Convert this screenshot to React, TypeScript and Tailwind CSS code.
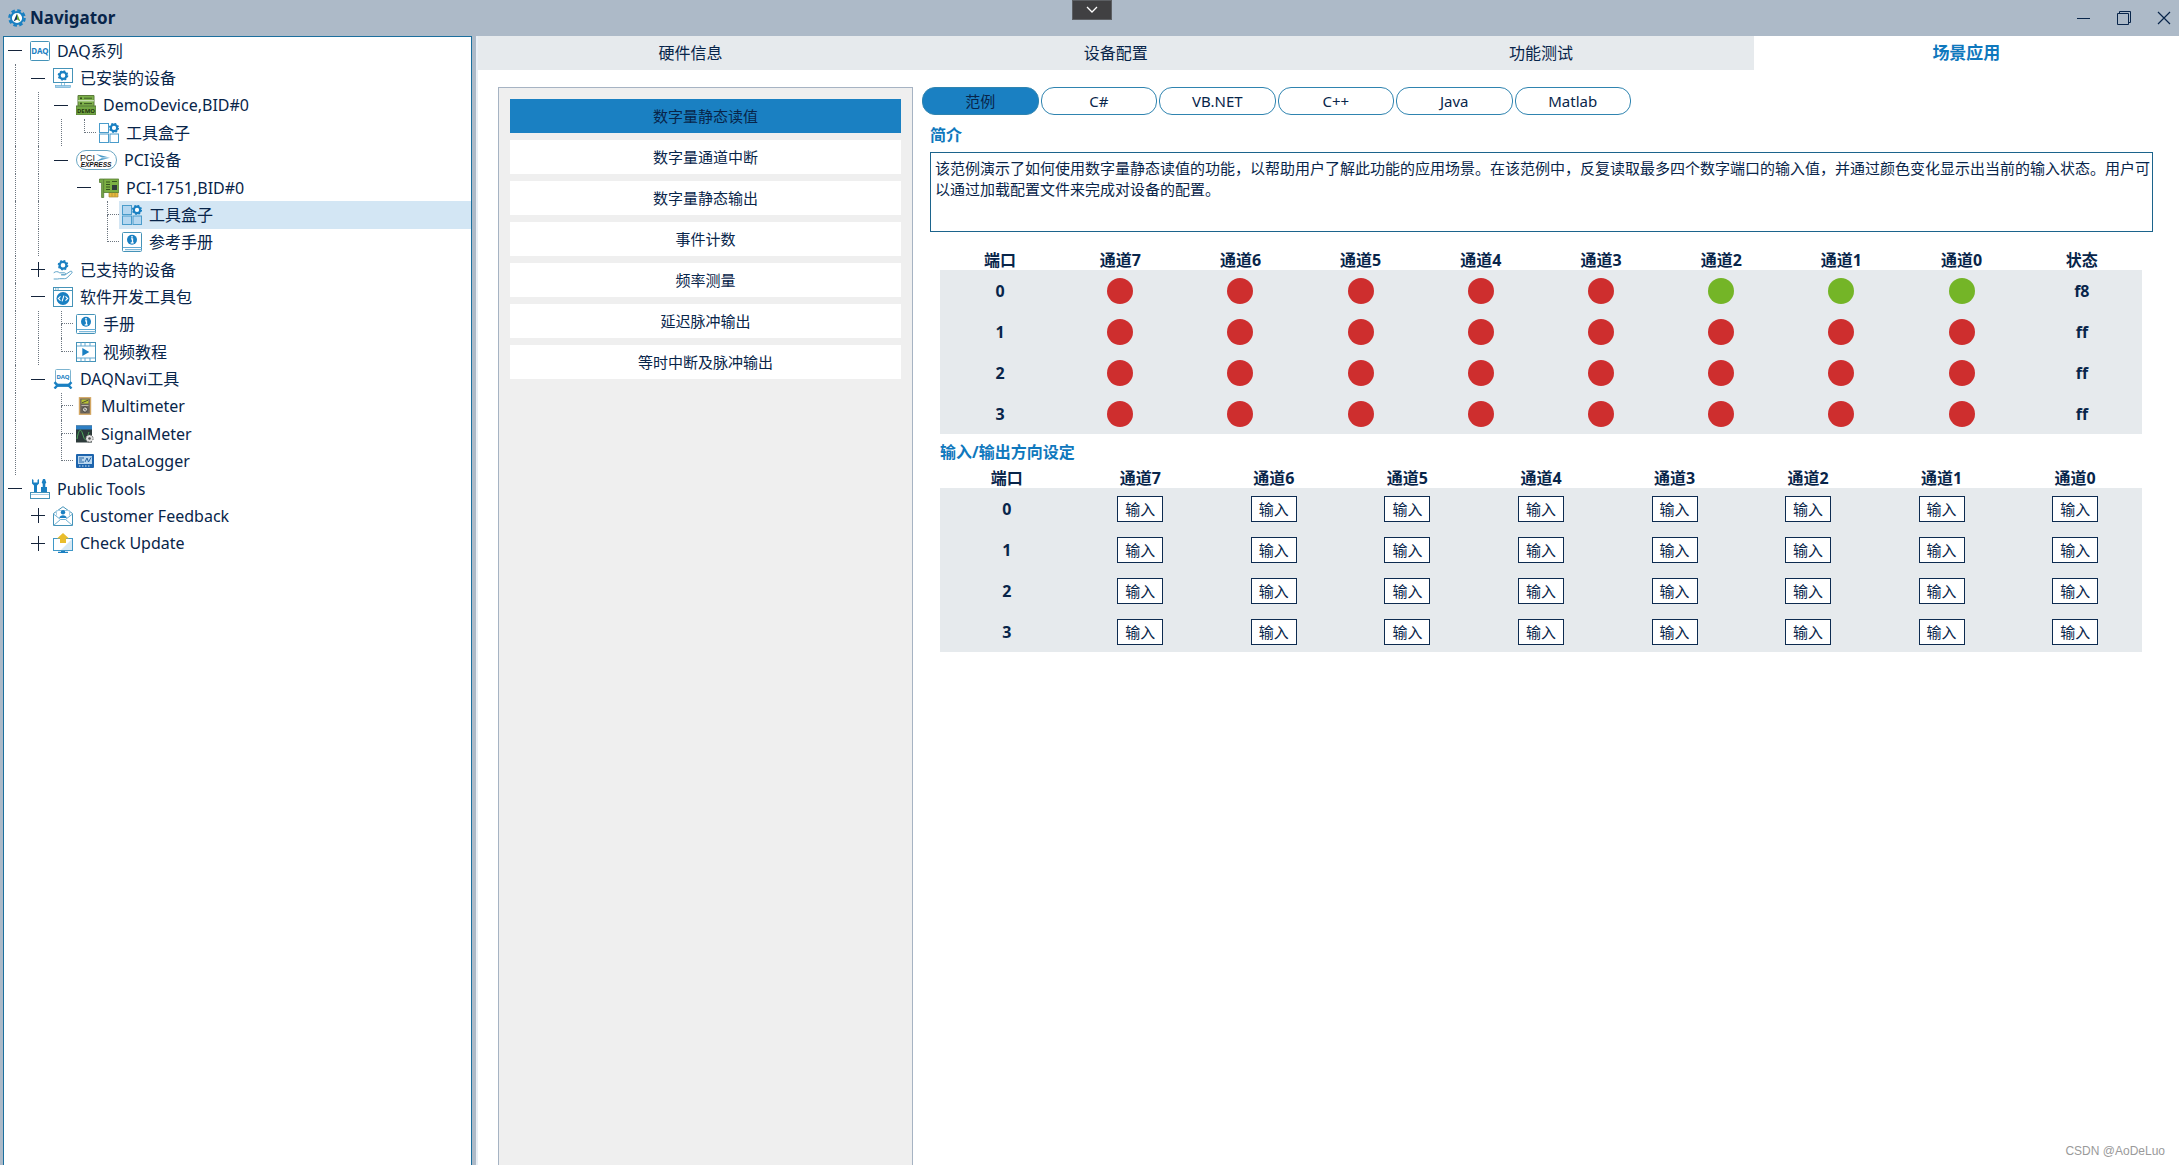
import { useState, type ReactNode } from 'react';
import clsx from 'clsx';

const BLUE = '#1a80c2';
const EDGE = '#4593b8';

/* ---------- icons ---------- */

function Gear({ cx, cy, r, fill = '#fff' }: { cx: number; cy: number; r: number; fill?: string }) {
  const step = (2 * Math.PI * (r + 1.2)) / 16;
  return (
    <g stroke={BLUE}>
      <circle cx={cx} cy={cy} r={r + 1.2} fill="none" strokeWidth="1.4" strokeDasharray={`${step} ${step}`} />
      <circle cx={cx} cy={cy} r={r} fill={fill} strokeWidth="2.2" />
    </g>
  );
}

function Svg({ w = 20, h = 20, children }: { w?: number; h?: number; children: ReactNode }) {
  return (
    <svg width={w} height={h} viewBox={`0 0 ${w} ${h}`} fill="none" className="shrink-0" aria-hidden="true">
      {children}
    </svg>
  );
}

function LogoIcon() {
  return (
    <Svg w={18} h={18}>
      <circle cx="9" cy="9" r="7.6" stroke={BLUE} strokeWidth="2.4" strokeDasharray="3.6 2.37" />
      <circle cx="9" cy="9" r="6" fill="#fff" stroke={BLUE} strokeWidth="1.8" />
      <path d="M9 4.5 5.6 12.6 9 10.6Z" fill="#12355f" />
      <path d="M9 4.5 12.4 12.6 9 10.6Z" fill="#6aa83a" />
    </Svg>
  );
}

function DaqIcon() {
  return (
    <Svg>
      <rect x="0.5" y="0.5" width="19" height="19" rx="1" fill="#fff" stroke={EDGE} />
      <text x="10" y="13" textAnchor="middle" fontSize="8" fontWeight="700" fontFamily="Noto Sans" fill={BLUE}>
        DAQ
      </text>
    </Svg>
  );
}

function MonitorIcon() {
  return (
    <Svg>
      <rect x="0.5" y="0.5" width="19" height="14" fill="#fff" stroke={EDGE} />
      <Gear cx={10} cy={7.5} r={3.4} />
      <path d="M8.5 15v3M11.5 15v3" stroke="#8fc3e0" />
      <rect x="2.5" y="17.5" width="15" height="2" fill="#a9d2ea" stroke="#5aa6d0" strokeWidth="0.6" />
    </Svg>
  );
}

function DemoIcon() {
  return (
    <Svg>
      <path d="M2 .5h16v11H2z" fill="#7db04a" stroke="#5c7c3c" />
      <path d="M0 11h20v9H0z" fill="#74a844" stroke="#56793a" />
      <path d="M2 5.8h16" stroke="#e6f2da" />
      <path d="M8 3.2h8M8 8.6h8" stroke="#3c5a25" />
      <circle cx="5" cy="3.2" r="1" fill="#2c4419" />
      <circle cx="5" cy="8.6" r="1" fill="#2c4419" />
      <text x="10" y="18" textAnchor="middle" fontSize="6" fontWeight="700" fontFamily="Noto Sans" fill="#24380f">
        DEMO
      </text>
    </Svg>
  );
}

function ToolboxIcon({ fill = '#fff' }: { fill?: string }) {
  return (
    <Svg>
      <g fill={fill} stroke="#4a9ccb">
        <rect x="0.5" y="0.5" width="9" height="9" />
        <rect x="0.5" y="11" width="9" height="8.5" />
        <rect x="11" y="11" width="8.5" height="8.5" />
      </g>
      <Gear cx={15} cy={4.9} r={3.2} />
    </Svg>
  );
}

function PciIcon() {
  return (
    <Svg w={41}>
      <rect x="0.5" y="0.5" width="40" height="19" rx="9.5" fill="#fff" stroke="#6ba7c4" />
      <text x="4" y="10.5" fontSize="9" fontFamily="Liberation Sans" fill="#222">
        PCI
      </text>
      <path d="M20 4 34 7.8 20 11.6l6-3.8z" fill="#4b9bc8" />
      <path d="M21 7.8h13" stroke="#fff" strokeWidth="0.7" />
      <text x="20" y="16.8" textAnchor="middle" fontSize="6.5" fontWeight="700" fontStyle="italic" fontFamily="Liberation Sans" fill="#111">
        EXPRESS
      </text>
    </Svg>
  );
}

function CardIcon() {
  return (
    <Svg>
      <path d="M10 14h9v5h-9z" fill="#e6b93c" stroke="#a98a3a" strokeWidth="0.7" />
      <path d="M.5 1h4.2v18.5H2.6V4.5H.5z" fill="#77a848" stroke="#557c34" strokeWidth="0.8" />
      <path d="M4.7 1h15v13.5h-15z" fill="#7cb043" stroke="#557c34" strokeWidth="0.8" />
      <path d="M7 4h4M7 6.5h4M7 9h4M7 11.5h4M13 3.5h5" stroke="#36551f" />
      <rect x="13" y="7" width="5" height="5" fill="#2f3c3a" />
      <path d="M13 14.5v4M16 14.5v4" stroke="#a98a3a" strokeWidth="0.7" />
    </Svg>
  );
}

function BookIcon() {
  return (
    <Svg>
      <rect x="0.5" y="0.5" width="19" height="19" rx="1" fill="#fff" stroke={EDGE} />
      <path d="M1 15.5h19M3 17.7h17" stroke="#62a9d2" />
      <circle cx="10" cy="7.7" r="5" fill={BLUE} />
      <path d="M9 6.8h1.5v3.8M8.7 10.8h3" stroke="#fff" strokeWidth="1.3" />
      <circle cx="10" cy="4.8" r="0.9" fill="#fff" />
    </Svg>
  );
}

function SupportIcon() {
  return (
    <Svg>
      <Gear cx={10} cy={5.2} r={3.4} />
      <path
        d="M.7 12.8c2-1.6 4-1.5 6 0h4.8c1.4 0 1.4 2 0 2H8.2h4l5-3.4c1.4-.7 2.6.5 1.6 1.7l-4.7 4.6c-.8.8-1.6 1-2.7 1H6.5L4.4 19 .7 19"
        fill="#fff"
        stroke="#5ea3c8"
      />
    </Svg>
  );
}

function SdkIcon() {
  return (
    <Svg>
      <rect x="0.5" y="0.5" width="19" height="19" fill="#fff" stroke={EDGE} />
      <path d="M1 3.5h18" stroke={EDGE} />
      <path d="M2 2h4" stroke={EDGE} strokeDasharray="1 .6" />
      <circle cx="10" cy="11.5" r="6.5" fill={BLUE} />
      <path d="M7.5 9.3 5.3 11.5l2.2 2.2M12.5 9.3l2.2 2.2-2.2 2.2M10.9 8.7l-1.8 5.6" stroke="#fff" strokeWidth="1.1" />
    </Svg>
  );
}

function VideoIcon() {
  return (
    <Svg>
      <rect x="0.5" y="0.5" width="19" height="19" fill="#fff" stroke={EDGE} />
      <path d="M1 4h18M1 16h18" stroke="#62a9d2" />
      <path d="M5 .5V4M9 .5V4M14 .5V4M5 16v3.5M9 16v3.5M14 16v3.5" stroke="#62a9d2" />
      <path d="M6.3 6v8l7-4z" fill={BLUE} />
    </Svg>
  );
}

function DaqToolsIcon() {
  return (
    <Svg>
      <path d="M2.5 14V1.5q0-1 1-1h13q1 0 1 1V14" fill="#fff" stroke="#7db4d0" />
      <text x="10" y="9.5" textAnchor="middle" fontSize="6" fontWeight="700" fontFamily="Noto Sans" fill={BLUE}>
        DAQ
      </text>
      <path d="M4 16.3h12" stroke={BLUE} strokeWidth="3.2" />
      <path d="M1.5 13.2l3 3.1-3 3.2M18.5 13.2l-3 3.1 3 3.2" stroke={BLUE} strokeWidth="2.4" />
    </Svg>
  );
}

function MultimeterIcon() {
  return (
    <Svg w={18} h={18}>
      <rect x="3.5" y="0.8" width="11" height="16.4" fill="#6b655c" stroke="#d3a763" strokeWidth="1.4" />
      <rect x="5.5" y="2.5" width="7" height="4" fill="#b8c432" />
      <path d="M6 5.8 12 3.2" stroke="#333" strokeWidth="0.8" />
      <path d="M5.5 8.5h7" stroke="#bdb7aa" />
      <circle cx="9" cy="12.5" r="2.6" fill="#cfccc4" stroke="#3a3732" strokeWidth="0.8" />
      <path d="M8 11.5l2 2" stroke="#333" />
    </Svg>
  );
}

function SignalIcon() {
  return (
    <Svg w={18} h={18}>
      <rect width="16" height="17" y="0.5" fill="#2c3a3a" />
      <rect width="16" height="4" y="0.5" fill="#2e7fc4" />
      <path d="M1 14C3 3 5 3 7 10s3 6 6-3" stroke="#4fa85c" />
      <circle cx="13.5" cy="13.5" r="2.6" fill="#e3e3e3" stroke="#e3e3e3" strokeWidth="2" />
      <circle cx="13.5" cy="13.5" r="3.6" stroke="#666" strokeDasharray="1.6 1.2" />
      <circle cx="13.5" cy="13.5" r="1.3" fill="#555" />
    </Svg>
  );
}

function LoggerIcon() {
  return (
    <Svg w={18} h={14}>
      <rect width="18" height="14" rx="1" fill="#1d64ad" />
      <rect x="2" y="2" width="14" height="8" fill="#b9d6ee" />
      <path d="M3 4h5M3 6h3M3 8h5M9 8l2-4 1.5 4L15 3.5" stroke="#2363a3" />
      <path d="M3 12h12" stroke="#d3e5f5" strokeDasharray="1.5 1.5" />
    </Svg>
  );
}

function PublicToolsIcon() {
  return (
    <Svg>
      <path d="M2 0v4.5l2 2V13h3V6.5l2-2V0L7.5 1v2.5h-4V1z" fill={BLUE} />
      <path d="M13 0h2l1.3 3.8-1 1V8H17v5h-6V8h1.7V4.8l-1-1z" fill={BLUE} />
      <rect x="0.5" y="13.5" width="19" height="6" fill="#fff" stroke={EDGE} />
      <path d="M1 15.5h18" stroke="#a8d0e6" />
    </Svg>
  );
}

function FeedbackIcon() {
  return (
    <Svg>
      <path d="M.5 7.5 10 .7l9.5 6.8v12H.5z" fill="#fff" stroke={EDGE} />
      <path d="M3.5 9.5V4.5h13v5" stroke="#a8d0e6" />
      <path d="M.5 8l7 5.5h5l7-5.5M.5 19.5l7-6M19.5 19.5l-7-6" stroke="#6fb0d3" />
      <circle cx="10" cy="6.3" r="2.2" fill={BLUE} />
      <path d="M6.3 12c.5-3.6 6.9-3.6 7.4 0z" fill={BLUE} />
    </Svg>
  );
}

function UpdateIcon() {
  return (
    <Svg>
      <rect x="0.5" y="5.5" width="19" height="12" fill="#fff" stroke="#3f98c8" />
      <path d="M19 6v11H8z" fill="#d6e8f4" />
      <path d="M10 0l6 5.5h-3V10H7V5.5H4z" fill="#e9bd2c" />
      <path d="M8 18h4v1.2H8zM5 18.8h10V20H5z" fill={BLUE} />
    </Svg>
  );
}

/* ---------- device tree ---------- */

interface TreeItem {
  label: string;
  icon: ReactNode;
  // one mark per column: '|' line, '.' blank, 'T' tee, 'L' corner, '-' open, '+' closed
  marks: string;
  selected?: boolean;
}

const TREE: TreeItem[] = [
  { label: 'DAQ系列', icon: <DaqIcon />, marks: '-' },
  { label: '已安装的设备', icon: <MonitorIcon />, marks: '|-' },
  { label: 'DemoDevice,BID#0', icon: <DemoIcon />, marks: '||-' },
  { label: '工具盒子', icon: <ToolboxIcon />, marks: '|||L' },
  { label: 'PCI设备', icon: <PciIcon />, marks: '||-' },
  { label: 'PCI-1751,BID#0', icon: <CardIcon />, marks: '||.-' },
  { label: '工具盒子', icon: <ToolboxIcon fill="#b5d7f0" />, marks: '||..T', selected: true },
  { label: '参考手册', icon: <BookIcon />, marks: '||..L' },
  { label: '已支持的设备', icon: <SupportIcon />, marks: '|+' },
  { label: '软件开发工具包', icon: <SdkIcon />, marks: '|-' },
  { label: '手册', icon: <BookIcon />, marks: '||T' },
  { label: '视频教程', icon: <VideoIcon />, marks: '||L' },
  { label: 'DAQNavi工具', icon: <DaqToolsIcon />, marks: '|-' },
  { label: 'Multimeter', icon: <MultimeterIcon />, marks: '|.T' },
  { label: 'SignalMeter', icon: <SignalIcon />, marks: '|.T' },
  { label: 'DataLogger', icon: <LoggerIcon />, marks: '|.L' },
  { label: 'Public Tools', icon: <PublicToolsIcon />, marks: '-' },
  { label: 'Customer Feedback', icon: <FeedbackIcon />, marks: '.+' },
  { label: 'Check Update', icon: <UpdateIcon />, marks: '.+' },
];

function Mark({ mark }: { mark: string }) {
  if (mark === '-' || mark === '+') {
    return (
      <button aria-label={mark === '-' ? 'Collapse' : 'Expand'} className="flex w-[23px] shrink-0 items-center justify-center">
        <Svg w={15} h={15}>
          <path d={mark === '-' ? 'M0 7.5h14' : 'M0 7.5h14M7.5 0v15'} stroke="#14233a" />
        </Svg>
      </button>
    );
  }
  return (
    <div className="w-[23px] shrink-0 pl-[11px]">
      {mark === '|' && <div className="h-full border-l border-dotted border-[#6d7680]" />}
      {(mark === 'T' || mark === 'L') && <div className="h-1/2 border-b border-l border-dotted border-[#6d7680]" />}
      {mark === 'T' && <div className="h-1/2 border-l border-dotted border-[#6d7680]" />}
    </div>
  );
}

function DeviceTree() {
  return (
    <nav className="w-[469px] shrink-0 border border-b-0 border-[#1c6f9e] bg-white">
      <ul className="grid h-[520px] auto-rows-fr text-base leading-6">
        {TREE.map((item, i) => (
          <li key={i} className="flex">
            {item.marks.split('').map((m, j) => (
              <Mark key={j} mark={m} />
            ))}
            <button className={clsx('flex min-w-0 flex-1 items-center gap-[7px] pl-[3px] text-left', item.selected && 'bg-[#d3e6f4]')}>
              {item.icon}
              {item.label}
            </button>
          </li>
        ))}
      </ul>
    </nav>
  );
}

/* ---------- main area ---------- */

const TABS = ['硬件信息', '设备配置', '功能测试', '场景应用'];
const SCENARIOS = ['数字量静态读值', '数字量通道中断', '数字量静态输出', '事件计数', '频率测量', '延迟脉冲输出', '等时中断及脉冲输出'];
const LANGUAGES = ['范例', 'C#', 'VB.NET', 'C++', 'Java', 'Matlab'];
const CHANNELS = [7, 6, 5, 4, 3, 2, 1, 0];
const PORTS = [0xf8, 0xff, 0xff, 0xff];

function StatusTable() {
  return (
    <table className="w-full table-fixed text-center">
      <thead>
        <tr className="h-5">
          <th>端口</th>
          {CHANNELS.map((c) => (
            <th key={c}>通道{c}</th>
          ))}
          <th>状态</th>
        </tr>
      </thead>
      <tbody className="bg-[#e6eaed]">
        {PORTS.map((value, port) => (
          <tr key={port} className="h-[41px]">
            <th>{port}</th>
            {CHANNELS.map((c) => (
              <td key={c}>
                <span className={clsx('mx-auto block size-[26px] rounded-full', (value >> c) & 1 ? 'bg-[#ce2e2e]' : 'bg-[#74b527]')} />
              </td>
            ))}
            <th>{value.toString(16)}</th>
          </tr>
        ))}
      </tbody>
    </table>
  );
}

function DirectionTable() {
  return (
    <table className="w-full table-fixed text-center">
      <thead>
        <tr className="h-5">
          <th>端口</th>
          {CHANNELS.map((c) => (
            <th key={c}>通道{c}</th>
          ))}
        </tr>
      </thead>
      <tbody className="bg-[#e6eaed]">
        {PORTS.map((_, port) => (
          <tr key={port} className="h-[41px]">
            <th>{port}</th>
            {CHANNELS.map((c) => (
              <td key={c}>
                <button className="mx-auto block h-[26px] w-[46px] border border-[#0d2b50] bg-white text-[15px] leading-5">输入</button>
              </td>
            ))}
          </tr>
        ))}
      </tbody>
    </table>
  );
}

export default function App() {
  const [tab, setTab] = useState(3);
  const [scenario, setScenario] = useState(0);
  const [language, setLanguage] = useState(0);

  return (
    <div className="relative flex h-screen flex-col overflow-hidden bg-[#adbac8] font-['Noto_Sans','Noto_Sans_CJK_SC',sans-serif] text-[#08254a]">
      {/* Title bar */}
      <header className="flex h-9 shrink-0 items-center justify-between px-2">
        <div className="flex items-center gap-1">
          <LogoIcon />
          <h1 className="text-[17px] font-bold leading-6">Navigator</h1>
        </div>
        <div className="flex items-center gap-[26px]">
          <button aria-label="Minimize">
            <Svg w={14} h={14}>
              <path d="M0 7.5h13" stroke="#08254a" />
            </Svg>
          </button>
          <button aria-label="Restore">
            <Svg w={14} h={14}>
              <path d="M.5 2.5h11v11H.5zM2.5 2.5v-2h11v11h-2" stroke="#08254a" />
            </Svg>
          </button>
          <button aria-label="Close">
            <Svg w={14} h={14}>
              <path d="M1 1l12 12M13 1 1 13" stroke="#08254a" strokeWidth="1.2" />
            </Svg>
          </button>
        </div>
      </header>
      <button
        aria-label="Show toolbar"
        className="absolute left-1/2 top-0 -ml-[18px] flex h-5 w-10 items-center justify-center border border-[#5c5f63] bg-[#404042]"
      >
        <Svg w={12} h={8}>
          <path d="M1 1l5 5 5-5" stroke="#fff" strokeWidth="1.3" />
        </Svg>
      </button>

      <div className="flex min-h-0 flex-1 pl-[3px]">
        <DeviceTree />

        <main className="ml-1 flex min-w-0 flex-1 flex-col border-l-2 border-[#e9eef5] bg-white">
          <div role="tablist" className="grid grid-cols-4">
            {TABS.map((name, i) => (
              <button
                key={name}
                role="tab"
                aria-selected={i === tab}
                onClick={() => setTab(i)}
                className={clsx('h-[34px] leading-6', i === tab ? 'bg-white text-[17px] font-bold text-[#0f78bd]' : 'bg-[#e6eaed] text-base')}
              >
                {name}
              </button>
            ))}
          </div>

          <div className="flex min-h-0 flex-1 pl-5 pt-[17px]">
            {/* Scenario list */}
            <ul className="flex w-[415px] shrink-0 flex-col gap-[7px] border border-b-0 border-[#a6b3c3] bg-[#efefef] px-[11px] pt-[11px] text-[15px] leading-6">
              {SCENARIOS.map((name, i) => (
                <li key={name}>
                  <button
                    onClick={() => setScenario(i)}
                    className={clsx('block h-[34px] w-full', i === scenario ? 'bg-[#1a80c2]' : 'bg-white')}
                  >
                    {name}
                  </button>
                </li>
              ))}
            </ul>

            <div className="min-w-0 flex-1 pl-[9px] pr-[26px]">
              <div className="grid w-[709px] grid-cols-6 gap-[2px] text-[15px]">
                {LANGUAGES.map((name, i) => (
                  <button
                    key={name}
                    onClick={() => setLanguage(i)}
                    className={clsx('h-7 rounded-[13px] border border-[#2f84b0] leading-6', i === language ? 'bg-[#1a80c2]' : 'bg-white')}
                  >
                    {name}
                  </button>
                ))}
              </div>

              <section className="pl-2">
                <h2 className="mb-[5px] mt-2 text-base font-bold leading-6 text-[#0f78bd]">简介</h2>
                <p className="h-20 border border-[#1c648c] pl-1 pt-[5px] text-[15px] leading-[21px]">
                  该范例演示了如何使用数字量静态读值的功能，以帮助用户了解此功能的应用场景。在该范例中，反复读取最多四个数字端口的输入值，并通过颜色变化显示出当前的输入状态。用户可以通过加载配置文件来完成对设备的配置。
                </p>
                <div className="pl-[10px] pr-[11px] pt-[18px] text-base leading-5">
                  <StatusTable />
                  <h2 className="mb-[6px] mt-2 font-bold text-[#0f78bd]">输入/输出方向设定</h2>
                  <DirectionTable />
                </div>
              </section>
            </div>
          </div>
        </main>
      </div>

      <span className="absolute bottom-[6px] right-[14px] font-['Liberation_Sans',sans-serif] text-xs text-[#9a9a9a]">CSDN @AoDeLuo</span>
    </div>
  );
}
